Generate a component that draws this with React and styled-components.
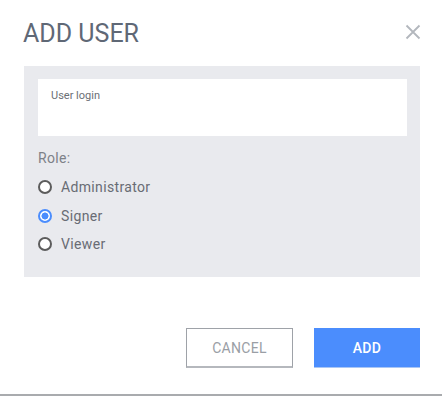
import React, { useState } from "react";
import styled, { createGlobalStyle } from "styled-components";

const roles = ["Administrator", "Signer", "Viewer"];

const App = () => {
    const [role, setRole] = useState("Signer");
    const [login, setLogin] = useState("");

    return (
        <>
            <GlobalStyle />
            <StDialog>
                <StHeader>
                    <StTitle>ADD USER</StTitle>
                    <StClose aria-label="close">
                        <svg width="16" height="16" viewBox="0 0 16 16">
                            <path d="M1.5 1.5 L14.5 14.5 M14.5 1.5 L1.5 14.5" stroke="#b3b7bd" strokeWidth="1.8" fill="none" />
                        </svg>
                    </StClose>
                </StHeader>
                <StPanel>
                    <StField>
                        <StFieldLabel>User login</StFieldLabel>
                        <StInput value={login} onChange={(e) => setLogin(e.target.value)} />
                    </StField>
                    <StRoleLabel>Role:</StRoleLabel>
                    <StRadioList>
                        {roles.map((r) => (
                            <StRadioRow key={r} onClick={() => setRole(r)}>
                                <StRadio checked={role === r} />
                                <span>{r}</span>
                            </StRadioRow>
                        ))}
                    </StRadioList>
                </StPanel>
                <StFooter>
                    <StButton>CANCEL</StButton>
                    <StButton primary>ADD</StButton>
                </StFooter>
            </StDialog>
        </>
    );
};

export default App;

const GlobalStyle = createGlobalStyle`
  body {
    margin: 0;
    background: #fff;
    font-family: Roboto, "Liberation Sans", sans-serif;
  }
`;

const StDialog = styled.div`
  width: 442px;
  height: 396px;
  box-sizing: border-box;
  padding: 0 22px 0 24px;
  background: #fff;
  border-bottom: 2px solid #a9abae;
  display: flex;
  flex-direction: column;
`;

const StHeader = styled.div`
  display: flex;
  justify-content: space-between;
  align-items: center;
  padding: 20px 0 18px;
  height: 28px;
`;

const StTitle = styled.h1`
  margin: 0 0 0 -1px;
  font-size: 25px;
  line-height: 28px;
  font-weight: 400;
  color: #5f6876;
`;

const StClose = styled.button`
  border: none;
  background: none;
  padding: 0;
  margin: -5px -1px 0 0;
  width: 16px;
  height: 16px;
  display: flex;
  cursor: pointer;
`;

const StPanel = styled.div`
  background: #e9eaee;
  height: 211px;
  box-sizing: border-box;
  padding: 13px 13px 0 14px;
`;

const StField = styled.div`
  background: #fff;
  height: 57px;
  box-sizing: border-box;
  padding: 10px 13px 0;
  display: flex;
  flex-direction: column;
`;

const StFieldLabel = styled.label`
  font-size: 11px;
  line-height: 13px;
  color: #6b6f75;
`;

const StInput = styled.input`
  border: none;
  outline: none;
  padding: 4px 0 0;
  font-family: inherit;
  font-size: 14px;
  color: #333;
  background: transparent;
`;

const StRoleLabel = styled.div`
  margin-top: 12px;
  font-size: 14px;
  line-height: 20px;
  color: #7d8188;
  letter-spacing: 0.3px;
`;

const StRadioList = styled.div`
  padding-top: 5px;
  display: flex;
  flex-direction: column;
`;

const StRadioRow = styled.label`
  display: flex;
  align-items: center;
  gap: 9px;
  height: 28.5px;
  font-size: 14px;
  color: #686c74;
  letter-spacing: 0.35px;
  cursor: pointer;
`;

const StRadio = styled.span`
  width: 14px;
  height: 14px;
  box-sizing: border-box;
  border-radius: 50%;
  border: 2px solid ${(props) => (props.checked ? "#4b8dfd" : "#5c5c5c")};
  background: ${(props) => (props.checked ? "radial-gradient(circle, #4b8dfd 0 3.2px, #fff 3.8px)" : "#fff")};
  flex-shrink: 0;
`;

const StFooter = styled.div`
  display: flex;
  justify-content: flex-end;
  gap: 21px;
  margin-top: 51px;
`;

const StButton = styled.button`
  width: ${(props) => (props.primary ? "106px" : "107px")};
  height: 40px;
  box-sizing: border-box;
  font-family: inherit;
  font-size: 14px;
  font-weight: ${(props) => (props.primary ? 500 : 400)};
  letter-spacing: 0.3px;
  color: ${(props) => (props.primary ? "#fff" : "#9a9ea5")};
  background: ${(props) => (props.primary ? "#4b8dfd" : "#fff")};
  border: ${(props) => (props.primary ? "none" : "1px solid #9ea2a8")};
  border-bottom: ${(props) => (props.primary ? "1px solid #a9c6f5" : "2px solid #b5b8bd")};
  cursor: pointer;
`;
